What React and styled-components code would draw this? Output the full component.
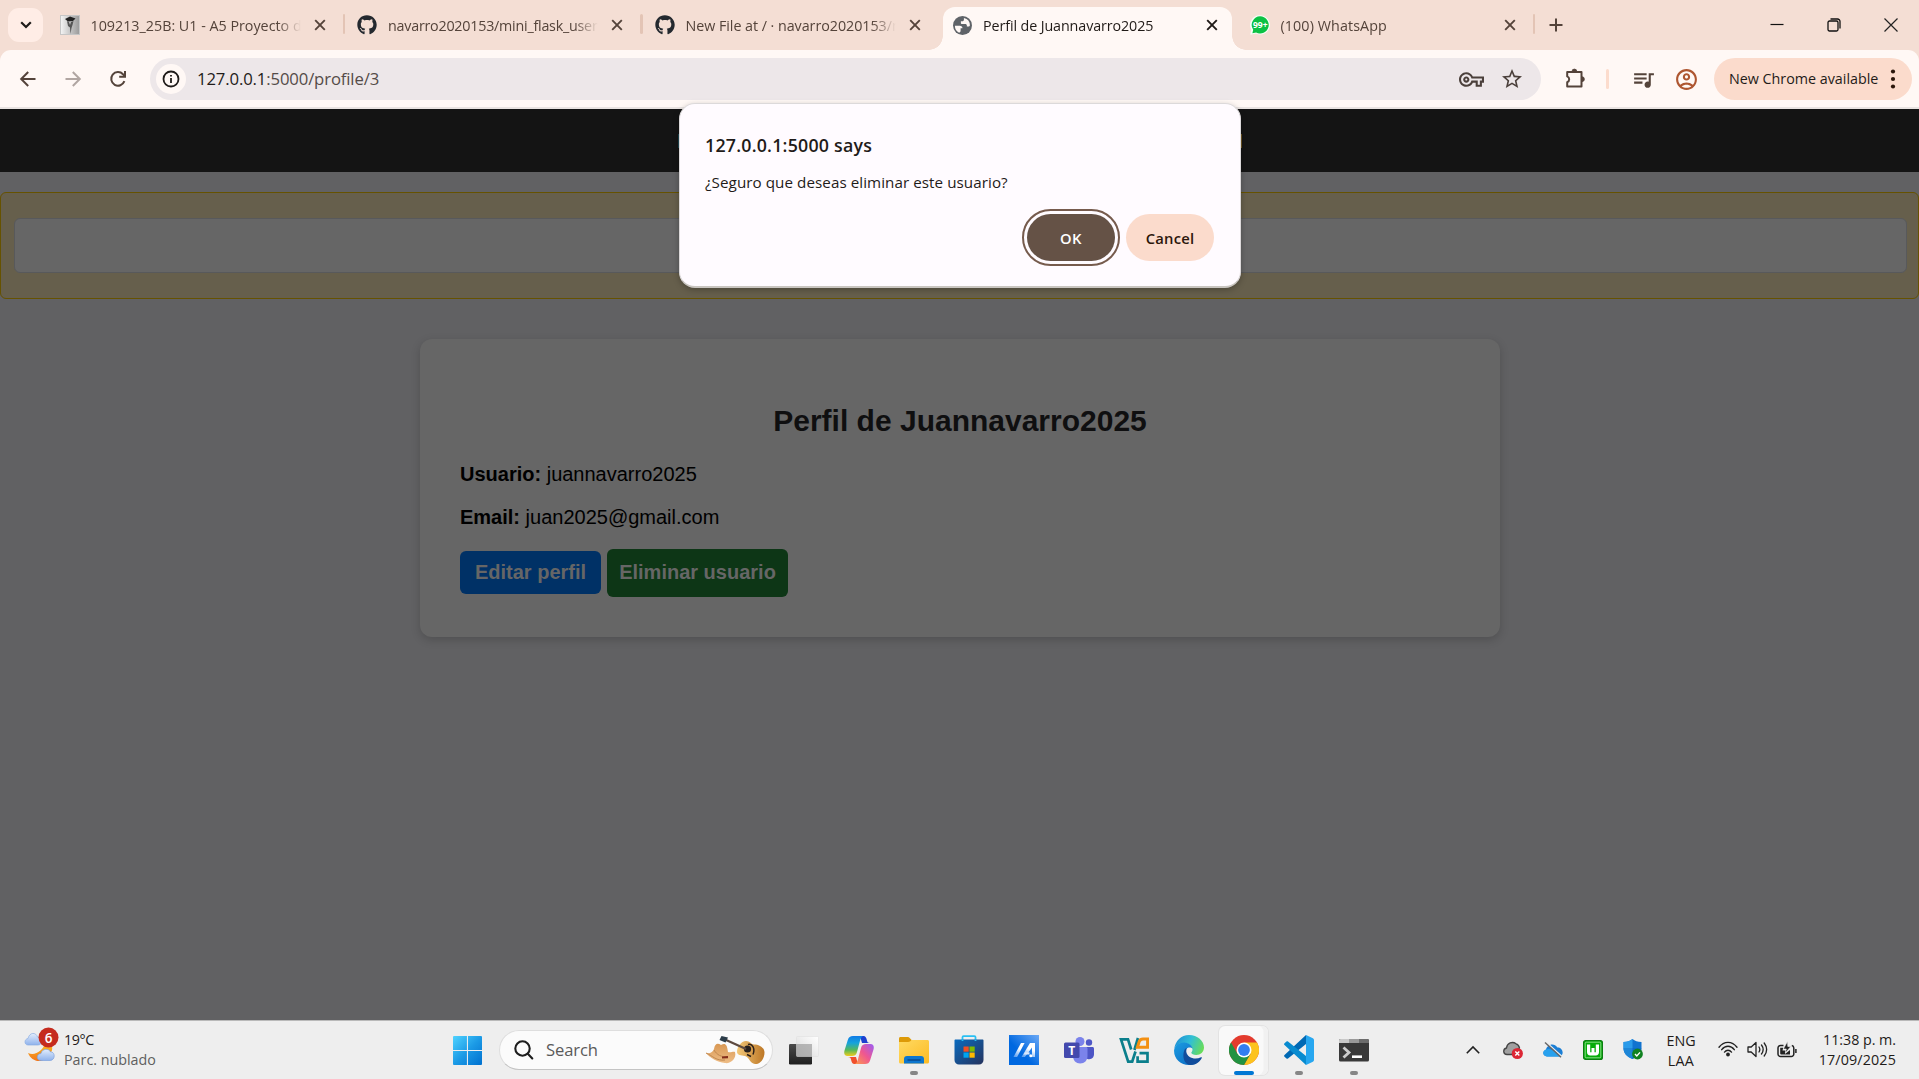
import React from "react";
import styled, { createGlobalStyle } from "styled-components";
import { FaGithub } from "react-icons/fa";
import {
  MdOutlineVpnKey,
  MdQueueMusic,
  MdOutlineAccountCircle,
  MdStarOutline,
} from "react-icons/md";

const GlobalStyle = createGlobalStyle`
  * { box-sizing: border-box; }
  body {
    margin: 0;
    overflow: hidden;
    background: #616163;
  }
  button { font-family: inherit; }
  svg { display: block; flex: none; }
`;

const uiFont = `"Open Sans", "Noto Sans", sans-serif`;
const pageFont = `"Liberation Sans", Arial, sans-serif`;

/* ---------- window ---------- */

const Desktop = styled.div`
  position: relative;
  display: grid;
  grid-template-rows: 50px 59px 911px 59px;
  width: 1919px;
  height: 1079px;
  overflow: hidden;
  font-family: ${uiFont};
`;

const Label = styled.span`
  font-size: ${(p) => p.$size || 14.3}px;
  font-weight: ${(p) => p.$weight || 400};
  letter-spacing: ${(p) => p.$track || 0}px;
  color: ${(p) => p.$color || "#1f1b19"};
  line-height: 20px;
  white-space: nowrap;
`;

/* ---------- tab strip ---------- */

const TabStrip = styled.header`
  display: flex;
  background: #f4ded4;
`;

const TabSearch = styled.button`
  display: grid;
  place-items: center;
  width: 35px;
  height: 34px;
  margin: 8px 3px 0 8px;
  padding: 0;
  border: 0;
  border-radius: 11px;
  background: #ffede6;
`;

const Tab = styled.div`
  position: relative;
  width: 297.5px;
  padding: 7px 4px 0;
  &::before {
    content: "";
    position: absolute;
    left: -1px;
    top: 14px;
    width: 2.5px;
    height: 20px;
    border-radius: 2px;
    background: ${(p) => (p.$divider ? "#e3c4b5" : "transparent")};
  }
`;

const TabBody = styled.div`
  position: relative;
  display: flex;
  align-items: center;
  height: 43px;
  padding: 0 14px 7px 9.5px;
  border-radius: 12px 12px 0 0;
  background: ${(p) => (p.$active ? "#fff8f5" : "transparent")};
  &::before,
  &::after {
    content: "";
    display: ${(p) => (p.$active ? "block" : "none")};
    position: absolute;
    bottom: 0;
    width: 14px;
    height: 14px;
  }
  &::before {
    left: -14px;
    background: radial-gradient(circle at 0 0, transparent 13.5px, #fff8f5 14px);
  }
  &::after {
    right: -14px;
    background: radial-gradient(circle at 100% 0, transparent 13.5px, #fff8f5 14px);
  }
`;

const Favicon = styled.span`
  display: grid;
  place-items: center;
  width: 20px;
  height: 20px;
  margin-right: 11px;
  color: #24292f;
`;

const TabTitle = styled.div`
  flex: 1;
  overflow: hidden;
  margin-right: 13px;
  mask-image: linear-gradient(to right, #000 calc(100% - 24px), transparent);
`;

const NewTab = styled(Tab)`
  width: 46px;
  display: flex;
  padding: 16px 0 0 13px;
`;

const WindowControls = styled.div`
  display: flex;
  align-items: center;
  gap: 37px;
  margin-left: auto;
  padding: 0 21px 1px 0;
`;

/* ---------- toolbar ---------- */

const ToolbarFrame = styled.div`
  background: #f4ded4;
`;

const Toolbar = styled.nav`
  display: flex;
  align-items: center;
  height: 59px;
  padding: 1px 7px 0 17px;
  border-bottom: 2px solid #e9e3e1;
  border-radius: 11px 11px 0 0;
  background: #fff8f5;
  color: #54433a;
`;

const NavButtons = styled.div`
  display: flex;
  gap: 23px;
  margin-right: 21px;
`;

const Omnibox = styled.div`
  display: flex;
  align-items: center;
  width: 1391px;
  height: 42px;
  padding: 0 17px 0 6px;
  border-radius: 21px;
  background: #ede7e9;
  color: #4b403b;
`;

const SiteInfo = styled.span`
  display: grid;
  place-items: center;
  width: 30px;
  height: 30px;
  margin-right: 11px;
  border-radius: 50%;
  background: #fff8f5;
`;

const OmniActions = styled.div`
  display: flex;
  align-items: center;
  gap: 16px;
  margin-left: auto;
`;

const ToolbarActions = styled.div`
  display: flex;
  align-items: center;
  margin-left: 22px;
`;

const ToolbarDivider = styled.span`
  width: 2.5px;
  height: 20px;
  margin: 0 22px 0 19px;
  border-radius: 2px;
  background: #fcdccd;
`;

const ProfileButton = styled.span`
  margin-left: 18px;
  color: #ae5630;
`;

const UpdateChip = styled.button`
  display: flex;
  align-items: center;
  justify-content: space-between;
  width: 198px;
  height: 42px;
  margin: -1px 0 0 auto;
  padding: 0 16px 0 15px;
  border: 0;
  border-radius: 21px;
  background: #fbdbcc;
`;

/* ---------- web page ---------- */

const Page = styled.main`
  background: #616163;
  font-family: ${pageFont};
`;

const SiteNav = styled.div`
  display: flex;
  justify-content: center;
  align-items: center;
  height: 63px;
  background: #141414;
`;

const NavLinks = styled.div`
  width: 564px;
  height: 14px;
  border-left: 1px solid #1f4650;
  border-right: 1px solid #6b5320;
`;

const Alert = styled.div`
  height: 107px;
  margin-top: 20px;
  padding: 25px 11px 25px 13px;
  border: 1px solid #665200;
  border-radius: 6px;
  background: #665f4c;
`;

const AlertBox = styled.div`
  height: 55px;
  border: 1px solid #58595b;
  border-radius: 6px;
  background: #666666;
`;

const Card = styled.section`
  width: 1080px;
  height: 298px;
  margin: 40px 0 0 420px;
  padding: 65px 40px 0;
  border-radius: 12px;
  background: #666666;
  box-shadow: 0 3px 10px rgba(0, 0, 0, 0.18);
`;

const Heading = styled.h2`
  margin: 0 0 25px;
  font-size: 30px;
  line-height: 34px;
  text-align: center;
  color: #0f0f10;
`;

const Field = styled.p`
  margin: 0 0 20px;
  font-size: 20px;
  line-height: 23px;
  color: #000;
`;

const Actions = styled.div`
  display: flex;
  align-items: flex-start;
  gap: 6px;
`;

const PageButton = styled.button`
  width: ${(p) => p.$width}px;
  height: ${(p) => p.$height}px;
  margin-top: ${(p) => p.$drop || 0}px;
  padding: 0 0 ${(p) => 2 - (p.$drop || 0) / 2}px;
  border: 0;
  border-radius: 6px;
  background: ${(p) => p.$tone};
  font: 700 20px/23px ${pageFont};
  color: #666666;
`;

/* ---------- dialog ---------- */

const Dialog = styled.div`
  position: absolute;
  left: 679px;
  top: 103px;
  width: 562px;
  height: 185px;
  padding: 31px 26px 0 25px;
  border: 1px solid #dcd9da;
  border-bottom: 2px solid #c9c5c0;
  border-radius: 16px;
  background: #fffbff;
  box-shadow: 0 2px 6px rgba(0, 0, 0, 0.25);
`;

const DialogText = styled.div`
  display: flex;
  flex-direction: column;
  gap: 17px;
`;

const DialogActions = styled.div`
  display: flex;
  justify-content: flex-end;
  gap: 11px;
  margin-top: 22px;
`;

const DialogButton = styled.button`
  width: 88px;
  height: 47px;
  padding: 1px 0 0;
  border: 0;
  border-radius: 24px;
  background: ${(p) => (p.$primary ? "#655246" : "#fbdbcc")};
  outline: ${(p) => (p.$primary ? "2px solid #765b4d" : "none")};
  outline-offset: 3px;
`;

/* ---------- taskbar ---------- */

const Taskbar = styled.footer`
  display: grid;
  grid-template-columns: 453px 1013px 1fr;
  border-top: 1px solid #b9b9b9;
  background: #eeeeee;
`;

const Weather = styled.div`
  display: flex;
  gap: 3px;
  padding: 5px 0 0 24px;
`;

const Stack = styled.div`
  display: flex;
  flex-direction: column;
  padding-top: 4px;
`;

const Apps = styled.div`
  display: flex;
  align-items: center;
`;

const SearchBox = styled.div`
  display: flex;
  align-items: center;
  width: 274px;
  height: 40px;
  margin: 0 3px 1px 17px;
  padding: 0 7px 0 14px;
  border: 1px solid #dedede;
  border-bottom-color: #c4c4c4;
  border-radius: 20px;
  background: #fbfbfb;
`;

const SearchLabel = styled(Label)`
  margin-left: 12px;
  margin-right: auto;
  padding-top: 1px;
`;

const AppSlot = styled.div`
  position: relative;
  display: grid;
  place-items: center;
  width: 49px;
  height: 49px;
  margin: 0 3px;
  border-radius: 6px;
  background: ${(p) => (p.$active ? "#f9f9f9" : "transparent")};
  box-shadow: ${(p) =>
    p.$active ? "inset -5px 0 0 -0.5px #f1f1f1, 0 0 0 1px #e3e3e3" : "none"};
  &::after {
    content: "";
    display: ${(p) => (p.$running || p.$active ? "block" : "none")};
    position: absolute;
    bottom: 0;
    width: ${(p) => (p.$active ? 20 : 8)}px;
    height: 4px;
    border-radius: 2px;
    background: ${(p) => (p.$active ? "#0078d4" : "#868686")};
  }
`;

const Tray = styled.div`
  display: flex;
  align-items: center;
  padding-right: 23px;
`;

const TrayIcons = styled.div`
  display: flex;
  align-items: center;
  gap: 20px;
  padding-bottom: 1px;
  margin-left: 23px;
`;

const Language = styled.div`
  display: flex;
  flex-direction: column;
  align-items: center;
  width: 40px;
  margin: 1px 17px 0 18px;
`;

const StatusIcons = styled.div`
  display: flex;
  align-items: center;
  gap: 9px;
  padding-bottom: 2px;
`;

const Clock = styled.div`
  display: flex;
  flex-direction: column;
  align-items: flex-end;
  margin-left: auto;
`;

/* ---------- icons ---------- */

const CloseIcon = ({ color = "#54433a" }) => (
  <svg width="12" height="12" viewBox="0 0 12 12" stroke={color} strokeWidth="1.9">
    <path d="M1.2 1.2 10.8 10.8M10.8 1.2 1.2 10.8" />
  </svg>
);

const CourseIcon = () => (
  <svg width="20" height="20" viewBox="0 0 20 20">
    <defs>
      <linearGradient id="course" x1="0" y1="0" x2="1" y2="0">
        <stop offset="0" stopColor="#f5f5f5" />
        <stop offset="1" stopColor="#999" />
      </linearGradient>
    </defs>
    <rect x=".5" y=".5" width="19" height="19" fill="url(#course)" stroke="#c6c6c6" />
    <path d="m5 4 5-2.500 5.500 2L13 6 8 6.500z" fill="#222" />
    <path d="m7 6 1 5 2 1.500.5 6.500 1-6 1-3 1-4-2.500 1-1 3-1-3z" fill="#555" />
  </svg>
);

const GlobeIcon = () => (
  <svg width="19" height="19" viewBox="0 0 20 20">
    <circle cx="10" cy="10" r="10" fill="#5f6368" />
    <path
      d="M2 10.200h5.200c1.700 0 2.800 1 2.800 2.600h-2v2.600c0 1.200-.7 2-2 1.900A8.200 8.200 0 0 1 2 10.200zM11.500 2v2c0 1-.8 1.600-1.800 1.600H8.300v1.700c0 .8.4 1.200 1.300 1.200h3.300c1 0 1.700.7 1.700 1.600v1c1.600 0 2.600.2 3.200-1.100A8.200 8.200 0 0 0 11.500 2z"
      fill="#fff8f5"
    />
  </svg>
);

const WhatsAppIcon = () => (
  <svg width="20" height="20" viewBox="0 0 20 20">
    <path d="M10.200.3a9.600 9.600 0 1 1-4.200 18.200L.3 19.700l1-5.200A9.600 9.600 0 0 1 10.200.3z" fill="#f4fff7" />
    <path d="M10.200 1.300a8.600 8.600 0 1 1-4.100 16.200l-3.700.8.800-3.600a8.600 8.600 0 0 1 7-13.400z" fill="#0bc144" />
    <text x="10.300" y="13.400" fontSize="8.500" fontWeight="700" textAnchor="middle" fill="#fff" fontFamily="Open Sans, sans-serif" textLength="14.500">
      99+
    </text>
  </svg>
);

const ArrowIcon = ({ flip, color = "#54433a" }) => (
  <svg width="22" height="22" viewBox="0 0 22 22" fill="none" stroke={color} strokeWidth="2">
    {flip ? <path d="M3.500 11h14M10.800 4l7 7-7 7" /> : <path d="M18.500 11h-14M11.200 4l-7 7 7 7" />}
  </svg>
);

const ReloadIcon = () => (
  <svg width="22" height="22" viewBox="0 0 22 22" fill="none" stroke="#54433a" strokeWidth="2">
    <path d="M17.400 13.200A6.800 6.800 0 1 1 16 6.200l1.500 1.500" />
    <path d="M18 3v5.800h-5.800" />
  </svg>
);

const InfoIcon = () => (
  <svg width="18" height="18" viewBox="0 0 18 18" fill="none" stroke="#1f1b19" strokeWidth="1.800">
    <circle cx="9" cy="9" r="7.500" />
    <path d="M9 8v5M9 4.900v1.700" />
  </svg>
);

const PuzzleIcon = () => (
  <svg width="24" height="24" viewBox="0 0 24 24" stroke="#54433a" strokeLinejoin="round">
    <path d="M4.200 5h14.300v14.500H4.200v-4.300a3.100 3.100 0 0 0 0-5.800z" fill="none" strokeWidth="2" />
    <path d="M9 4.500a2.400 2.400 0 0 1 4.800 0zM19 9.800a2.400 2.400 0 0 1 0 4.800z" fill="#54433a" strokeWidth=".8" />
  </svg>
);

const WeatherIcon = () => (
  <svg width="37" height="38" viewBox="0 0 37 38">
    <defs>
      <linearGradient id="cloud" x1="0" y1="0" x2="0" y2="1">
        <stop offset="0" stopColor="#e2edfc" />
        <stop offset="1" stopColor="#8fb2ec" />
      </linearGradient>
      <linearGradient id="moon" x1="0" y1="0" x2="0" y2="1">
        <stop offset="0" stopColor="#fbbf24" />
        <stop offset="1" stopColor="#f2761b" />
      </linearGradient>
    </defs>
    <path d="M4 19c-4 0-4-6 0-6.500C5.500 6 12 6 13.500 11 19 11 19 19 14 19z" fill="url(#cloud)" stroke="#8baee2" strokeWidth=".7" />
    <path d="M21 17c8 0 9 6 5 11C20 38 8 37 4 27c7 3 15-2 17-10z" fill="url(#moon)" />
    <path d="M17 34.500c-5 0-5-6.500 0-7 1-5 8-5.500 9.500-1.500 5-.5 5 8.500-.5 8.500z" fill="url(#cloud)" stroke="#7ea2dc" strokeWidth=".7" />
    <circle cx="24.500" cy="11.500" r="10" fill="#c52b1e" />
    <text x="24.500" y="16.500" textAnchor="middle" fontSize="13.500" fontWeight="600" fill="#fff" fontFamily="Open Sans, sans-serif">
      6
    </text>
  </svg>
);

const WindowsIcon = () => (
  <svg width="29" height="29" viewBox="0 0 30 30">
    <defs>
      <linearGradient id="win" x1="0" y1="0" x2="1" y2="1">
        <stop offset="0" stopColor="#50d3ff" />
        <stop offset=".5" stopColor="#1c9be6" />
        <stop offset="1" stopColor="#0070cf" />
      </linearGradient>
    </defs>
    <path
      d="M1 0H14.400V14.400H0V1a1 1 0 0 1 1-1zM15.500 0H29a1 1 0 0 1 1 1V14.400H15.500zM0 15.500H14.400V30H1a1 1 0 0 1-1-1zM15.500 15.500H30V29a1 1 0 0 1-1 1H15.500z"
      fill="url(#win)"
    />
  </svg>
);

const SearchIcon = () => (
  <svg width="20" height="20" viewBox="0 0 20 20" fill="none" stroke="#1d1d1d" strokeWidth="2.100" strokeLinecap="round">
    <circle cx="8.500" cy="8.500" r="7.200" />
    <path d="m13.800 13.800 4.500 4.700" />
  </svg>
);

const GuitarArt = () => (
  <svg width="60" height="30" viewBox="0 0 60 30">
    <defs>
      <linearGradient id="guitar" x1="0" y1="0" x2="1" y2="0">
        <stop offset="0" stopColor="#f3c878" />
        <stop offset="1" stopColor="#bd7726" />
      </linearGradient>
      <linearGradient id="hat" x1="0" y1="0" x2="0" y2="1">
        <stop offset="0" stopColor="#d99853" />
        <stop offset="1" stopColor="#eebd86" />
      </linearGradient>
    </defs>
    <path d="M32 17c0-5 4-11 9-11 4 0 4.500 3 8 3.500 5 0 10.500 3 10.500 8C59.500 24 55 29.500 50 29c-5-.5-5.500-6.500-10-8-4-.5-8-1-8-4z" fill="url(#guitar)" />
    <path d="M43 9.500c4-1.500 7.500 4 5 10M42 19.500l4 2" fill="none" stroke="#2c2019" strokeWidth="1.500" />
    <circle cx="42.500" cy="14" r="3.600" fill="#27201d" />
    <path d="m20 4.500 21 9.500" stroke="#5d4a40" strokeWidth="2.300" />
    <path d="m16.500 1 6.500 1.500-2.500 5-6-2.500z" fill="#2c3d49" />
    <path d="M1 18c4 1 7-1 8-4 1-6 4-6 7-4 4-2 6-1 7 7 3 1 5-1 7 0 2 7-5 12-10 11C12 27 5 23 1 18z" fill="url(#hat)" />
    <path d="M9 15c3 5 7 7 14 7M1 18c7 3 10 8 19 7" fill="none" stroke="#c08850" strokeWidth="1" />
    <path d="m17 21.500 6-.5v2.200l-6 .3z" fill="#832d1b" />
  </svg>
);

const TaskViewIcon = () => (
  <svg width="30" height="29" viewBox="0 0 30 29">
    <defs>
      <linearGradient id="tvd" x1="0" y1="0" x2="0" y2="1">
        <stop offset="0" stopColor="#4b4b4b" />
        <stop offset="1" stopColor="#1f1f1f" />
      </linearGradient>
      <linearGradient id="tvl" x1="1" y1="0" x2="0" y2="1">
        <stop offset="0" stopColor="#fff" />
        <stop offset="1" stopColor="#d9d9d9" />
      </linearGradient>
    </defs>
    <rect x="0" y="8" width="23" height="20.500" rx="1.200" fill="url(#tvd)" />
    <rect x="7.500" y=".5" width="22" height="20" rx="1" fill="url(#tvl)" stroke="#ddd" strokeWidth=".5" />
    <path d="M7.500 8H23v12.500H7.500z" fill="#8f8f8f" fillOpacity=".6" />
  </svg>
);

const CopilotIcon = () => (
  <svg width="30" height="28" viewBox="0 0 30 28">
    <defs>
      <linearGradient id="cpa" x1="0" y1="0" x2="0" y2="1">
        <stop offset="0" stopColor="#0f7be6" />
        <stop offset=".35" stopColor="#16a3dc" />
        <stop offset=".7" stopColor="#57b958" />
        <stop offset="1" stopColor="#f0cb1c" />
      </linearGradient>
      <linearGradient id="cpb" x1="1" y1="0" x2="0" y2="1">
        <stop offset="0" stopColor="#9a5cf5" />
        <stop offset=".5" stopColor="#ef5790" />
        <stop offset="1" stopColor="#fd9c4c" />
      </linearGradient>
    </defs>
    <path d="M16 0h3.500c2 0 2.800 1.500 3.500 4.500.4 1.800 1 2.500 3 2.500h-8z" fill="#1c3fd0" />
    <path d="M14 28h-3.500c-2 0-2.800-1.500-3.500-4.500C6.600 21.700 6 21 4 21h8z" fill="#f0502c" />
    <path d="M9 0h10c-2 1-2.500 3-3.200 5.500L13 16c-.8 3-2.500 4-5 4H3.500C.5 20-.3 17.500.5 14.500L3.800 4C4.800 1 6.200 0 9 0z" fill="url(#cpa)" />
    <path d="M21 28H11c2-1 2.500-3 3.200-5.500L17 12c.8-3 2.500-4 5-4h4.500c3 0 3.800 2.500 3 5.500L26.200 24c-1 3-2.400 4-5.200 4z" fill="url(#cpb)" />
  </svg>
);

const FolderIcon = () => (
  <svg width="30" height="27" viewBox="0 0 30 27">
    <defs>
      <linearGradient id="fold" x1="0" y1="0" x2="1" y2="1">
        <stop offset="0" stopColor="#ffda63" />
        <stop offset="1" stopColor="#fcbb23" />
      </linearGradient>
    </defs>
    <path d="M0 1.500C0 .6.6 0 1.500 0h7c1 0 1.500.3 2.200 1L13 3.500V8H0z" fill="#dd9a08" />
    <path d="M0 5h9c1 0 1.600-.2 2.300-.8L12.500 3H28.500c.9 0 1.500.6 1.500 1.500V25c0 .9-.6 1.500-1.500 1.500H1.500C.6 26.500 0 25.900 0 25z" fill="url(#fold)" />
    <path d="M5 26.500V22c0-1.800 1-3 3-3h14c2 0 3 1.200 3 3v4.500z" fill="#0d76ce" />
    <path d="M8.500 23h13" stroke="#063f80" strokeWidth="1.200" />
  </svg>
);

const StoreIcon = () => (
  <svg width="30" height="30" viewBox="0 0 30 30">
    <defs>
      <linearGradient id="store" x1="0" y1="0" x2="1" y2="1">
        <stop offset="0" stopColor="#0a6bbf" />
        <stop offset="1" stopColor="#26335d" />
      </linearGradient>
    </defs>
    <path d="M8.500 7V2.200c0-.7.4-1.100 1.100-1.100h10.800c.7 0 1.100.4 1.100 1.100V7" fill="none" stroke="#29c0f3" strokeWidth="1.800" />
    <path d="M.5 5.500c0-.6.4-1 1-1h27c.6 0 1 .4 1 1V25a4.500 4.500 0 0 1-4.500 4.500H5A4.500 4.500 0 0 1 .5 25z" fill="url(#store)" />
    <path d="M8.500 4.500V6m13-1.500V6" stroke="#29c0f3" strokeWidth="1.800" />
    <path d="M9.500 11.500h5.200v5.200H9.500z" fill="#f25022" />
    <path d="M15.500 11.500h5.200v5.200h-5.200z" fill="#7fba00" />
    <path d="M9.500 17.500h5.200v5.200H9.500z" fill="#00a4ef" />
    <path d="M15.500 17.500h5.200v5.200h-5.200z" fill="#ffb900" />
  </svg>
);

const AsusIcon = () => (
  <svg width="30" height="30" viewBox="0 0 30 30">
    <defs>
      <linearGradient id="asus" x1="1" y1="0" x2=".4" y2=".6">
        <stop offset="0" stopColor="#6aa8f5" />
        <stop offset="1" stopColor="#0068e0" />
      </linearGradient>
      <linearGradient id="asusL" x1="0" y1="1" x2=".4" y2="0">
        <stop offset="0" stopColor="#4c95ee" />
        <stop offset=".7" stopColor="#fff" />
      </linearGradient>
    </defs>
    <path d="M0 0h30v30H0z" fill="url(#asus)" />
    <path d="M4.500 22 12 8h3.600L8.100 22z" fill="url(#asusL)" />
    <path d="M12.500 22 21 8h5v14h-3V12.500L15.900 22z" fill="url(#asusL)" />
    <path d="M16 17.200h4.500v2.300h-6z" fill="#dbe9fd" />
    <circle cx="21.800" cy="20.800" r="1.500" fill="#fff" />
  </svg>
);

const TeamsIcon = () => (
  <svg width="30" height="27" viewBox="0 0 30 27">
    <circle cx="25" cy="5.500" r="3.200" fill="#4f57c6" />
    <path d="M21 10h7.500c.8 0 1.500.7 1.500 1.500V17c0 3-1.800 5.200-4.700 5.200-1.600 0-3-.6-4.300-2z" fill="#4d55c5" />
    <circle cx="16" cy="4.500" r="4.500" fill="#7b83eb" />
    <path d="M9 10h13c.8 0 1.500.7 1.500 1.500V19c0 4.500-3 7.500-7.300 7.500S9 23.500 9 19z" fill="#7b83eb" />
    <rect x="0" y="5.500" width="15.500" height="15.500" rx="1.500" fill="#4349ad" />
    <text x="7.700" y="17.500" textAnchor="middle" fontSize="12" fontWeight="700" fill="#fff" fontFamily="Open Sans, sans-serif">
      T
    </text>
  </svg>
);

const VirtualIcon = () => (
  <svg width="30" height="27" viewBox="0 0 30 27" fill="none" strokeWidth="2.700">
    <path d="M12.200 12.500 9 2.400H2L9.200 24.600h4L16.500 14.500" stroke="#0b7f8c" />
    <path d="M19 1 15.400 13" stroke="#0b7f8c" />
    <path d="M20.500 16.200h8v8.400H18.600v-5.400" stroke="#0b7f8c" />
    <path d="M18.400 10.300 20.300 4.400Q21.200 1.900 24 1.900h4.600v8.400z" stroke="#f39012" strokeWidth="3" />
  </svg>
);

const EdgeIcon = () => (
  <svg width="30" height="30" viewBox="0 0 30 30">
    <defs>
      <linearGradient id="edgeTop" x1="0" y1=".3" x2="1" y2=".6">
        <stop offset="0" stopColor="#1f8fd6" />
        <stop offset=".5" stopColor="#31bfd5" />
        <stop offset="1" stopColor="#69dd57" />
      </linearGradient>
      <linearGradient id="edgeLow" x1="0" y1="0" x2="1" y2="1">
        <stop offset="0" stopColor="#1b9de2" />
        <stop offset="1" stopColor="#0a62bd" />
      </linearGradient>
    </defs>
    <path d="M.3 14C1 6 7.300 0 15 0c8.500 0 15 6 15 12.500 0 4.500-3.500 7.500-7.700 7.500-3 0-5-1-5-2.200 0-.7 1.200-1.300 1.200-3.300C18.500 11 14.500 8 10 8 5 8 1.500 11 .3 14z" fill="url(#edgeTop)" />
    <path d="M.1 15C1 10.500 5 7.500 10 7.500c4.500 0 8.500 3 8.500 6.500-1-2-5-2-6.500.5-3 5 1 11.500 7 11.500 3 0 5-.8 7.500-2C24 28 20 30 15 30 6.500 30-.5 23.500.1 15z" fill="url(#edgeLow)" />
    <path d="M12 13.200c-4 2.500-4 16 4 16.700 6 .3 10-3.400 11.800-7 .3-.6-.3-.9-.8-.6-6 3-14 .5-14.700-5.500-.1-1.300 0-2.500.7-3.600z" fill="#114d9c" />
  </svg>
);

const ChromeIcon = () => (
  <svg width="30" height="30" viewBox="0 0 30 30">
    <circle cx="15" cy="15" r="15" fill="#e33b2e" />
    <path d="M15 7.500h13A15 15 0 0 1 15 30l6.500-11.250z" fill="#fcc31e" />
    <path d="M2 7.500A15 15 0 0 0 15 30l6.500-11.250H8.500z" fill="#229342" />
    <circle cx="15" cy="15" r="7.500" fill="#fff" />
    <circle cx="15" cy="15" r="5.900" fill="#327ef0" />
  </svg>
);

const CodeIcon = () => (
  <svg width="30" height="30" viewBox="0 0 30 30">
    <path d="M22 0v9L4 23.500c-.5.4-1 .4-1.500 0L.5 21.700c-.6-.6-.6-1.300 0-1.800z" fill="#0069b4" />
    <path d="M22 30v-9L4 6.500c-.5-.4-1-.4-1.500 0L.5 8.300c-.6.6-.6 1.300 0 1.800z" fill="#088bd0" />
    <path d="M22 0 28.900 3.300c.7.300 1.100.9 1.100 1.700v20c0 .8-.4 1.400-1.100 1.700L22 30z" fill="#27a7f0" />
  </svg>
);

const TerminalIcon = () => (
  <svg width="30" height="23" viewBox="0 0 30 23">
    <rect width="30" height="22.500" rx="1.500" fill="#393939" />
    <path d="M1.500 0H10v4H0V1.500A1.500 1.500 0 0 1 1.500 0z" fill="#c9c9c9" />
    <path d="M10 0h10v4H10z" fill="#999" />
    <path d="M20 0h8.500A1.500 1.500 0 0 1 30 1.500V4H20z" fill="#6c6c6c" />
    <path d="m4.500 8.500 5.500 5-5.500 5" fill="none" stroke="#ccc" strokeWidth="2.800" />
    <path d="M13 17.700h10" stroke="#fff" strokeWidth="2.600" />
  </svg>
);

const ChevronUp = () => (
  <svg width="14" height="10" viewBox="0 0 14 10" fill="none" stroke="#222" strokeWidth="1.600">
    <path d="m.8 8.200 6.200-6.200 6.200 6.200" />
  </svg>
);

const CloudErrorIcon = () => (
  <svg width="20" height="20" viewBox="0 0 20 20">
    <path d="M4 14.500c-4 0-4.500-5.500-.5-6.500C4 3 9.500 1 13 3.800c2.500.5 3 2 3.500 4.200l-6 6.500z" fill="#a0a0a0" stroke="#444" strokeWidth="1.300" />
    <circle cx="14.300" cy="13.500" r="5.600" fill="#dc2634" />
    <path d="m12.300 11.500 4 4m0-4-4 4" stroke="#fff" strokeWidth="1.400" />
  </svg>
);

const OneDriveIcon = () => (
  <svg width="20" height="18" viewBox="0 0 20 18">
    <path d="M4 15.500c-4.500-.5-5-5.500-1-7 1-5 8-7.500 11.500-2C20 6 22 15 16 15.500z" fill="#1a7ed5" />
    <path d="M4 15.500c-4.500-.5-5-5.500-1-7 3-1.500 6 0 8 1.500l8 4c-1 1-1.500 1.500-3 1.500z" fill="#28a1ee" />
    <path d="m3.500 1.500 15.500 14" stroke="#eee" strokeWidth="1.500" />
    <path d="m2 1.500 16 14.800" stroke="#666" strokeWidth="1.400" />
  </svg>
);

const GreenIcon = () => (
  <svg width="20" height="20" viewBox="0 0 20 20">
    <rect x=".6" y=".6" width="18.800" height="18.800" rx="2" fill="#07ac0a" stroke="#0b7d10" strokeWidth="1.200" />
    <rect x="2.200" y="2.200" width="15.600" height="15.600" rx="1" fill="none" stroke="#a4e7a1" strokeWidth=".8" />
    <path d="M4 4.500h3.200v7.700h1.300V8h3v4.200h1.300V4.500H16V12c0 2.200-1.200 3.400-3.200 3.400H7.200C5.200 15.400 4 14.200 4 12z" fill="#fff" />
  </svg>
);

const ShieldIcon = () => (
  <svg width="20" height="21" viewBox="0 0 20 21">
    <path d="M9.500 0c2.500 2 5 2.800 9 3v6c0 5-3 8.500-9 11C3.500 17.500.5 14 .5 9V3c4-.2 6.500-1 9-3z" fill="#1173cf" />
    <path d="M9.500 0v20C3.500 17.500.5 14 .5 9V3c4-.2 6.500-1 9-3z" fill="#2a9bea" />
    <path d="M.5 9h18c0 5-3 8.500-9 11C3.500 17.500.5 14 .5 9z" fill="#0a5eb5" fillOpacity=".35" />
    <circle cx="14.500" cy="15" r="5.400" fill="#108220" />
    <path d="m12 15 1.800 1.900 3.200-3.500" fill="none" stroke="#fff" strokeWidth="1.400" />
  </svg>
);

const WifiIcon = () => (
  <svg width="20" height="16" viewBox="0 0 20 16" fill="none" stroke="#222" strokeWidth="1.400" strokeLinecap="round">
    <path d="M1 6.200C6-.3 14-.3 19 6.200M3.700 8.700c3.500-4.600 9.100-4.600 12.600 0M6.500 11.100c2-2.500 5-2.500 7 0" />
    <circle cx="10" cy="13.500" r="1.200" fill="#222" />
  </svg>
);

const SpeakerIcon = () => (
  <svg width="21" height="17" viewBox="0 0 21 17" fill="none" stroke="#222" strokeWidth="1.300" strokeLinecap="round" strokeLinejoin="round">
    <path d="M1 6h3.200L9 1.500v14L4.200 11H1z" />
    <path d="M12 6c1 1.500 1 3.500 0 5M14.500 4c2 2.700 2 6.300 0 9M17.200 2c3 4 3 9 0 13" />
  </svg>
);

const BatteryIcon = () => (
  <svg width="20" height="17" viewBox="0 0 20 17">
    <path d="M6.500 4.500h-3A2.500 2.500 0 0 0 1 7v6a2.500 2.500 0 0 0 2.500 2.500h10.800a2.500 2.500 0 0 0 2.500-2.500V7a2.500 2.500 0 0 0-2-2.400M18.900 8v4" fill="none" stroke="#222" strokeWidth="1.500" />
    <path d="M3.200 6.700h3L5.500 9.500h3L8 13l5-4v4.500H4.200a1 1 0 0 1-1-1z" fill="#222" />
    <path d="M10.500.5 6.300 8h3L8.300 12l5.500-6.500h-3z" fill="#222" stroke="#eee" strokeWidth=".6" />
  </svg>
);

/* ---------- data ---------- */

const tabs = [
  { title: "109213_25B: U1 - A5 Proyecto de", track: 0, icon: <CourseIcon /> },
  { title: "navarro2020153/mini_flask_users", track: -0.23, icon: <FaGithub size={20} />, divider: true },
  { title: "New File at / · navarro2020153/m", track: -0.04, icon: <FaGithub size={20} />, divider: true },
  { title: "Perfil de Juannavarro2025", track: -0.1, icon: <GlobeIcon />, active: true },
  { title: "(100) WhatsApp", track: 0.1, icon: <WhatsAppIcon /> },
];

const apps = [
  { icon: <TaskViewIcon /> },
  { icon: <CopilotIcon /> },
  { icon: <FolderIcon />, running: true },
  { icon: <StoreIcon /> },
  { icon: <AsusIcon /> },
  { icon: <TeamsIcon /> },
  { icon: <VirtualIcon /> },
  { icon: <EdgeIcon /> },
  { icon: <ChromeIcon />, active: true },
  { icon: <CodeIcon />, running: true },
  { icon: <TerminalIcon />, running: true },
];

export default function App() {
  return (
    <>
      <GlobalStyle />
      <Desktop>
        <TabStrip>
          <TabSearch>
            <svg width="12" height="8" viewBox="0 0 12 8" fill="none" stroke="#1f1b19" strokeWidth="2.200">
              <path d="m1.200 1.200 4.800 4.800 4.800-4.800" />
            </svg>
          </TabSearch>
          {tabs.map((tab) => (
            <Tab key={tab.title} $divider={tab.divider}>
              <TabBody $active={tab.active}>
                <Favicon>{tab.icon}</Favicon>
                <TabTitle>
                  <Label $track={tab.track} $color={tab.active ? "#201a17" : "#54433a"}>
                    {tab.title}
                  </Label>
                </TabTitle>
                <CloseIcon color={tab.active ? "#201a17" : undefined} />
              </TabBody>
            </Tab>
          ))}
          <NewTab $divider>
            <svg width="18" height="18" viewBox="0 0 18 18" stroke="#54433a" strokeWidth="2">
              <path d="M9 2.500v13M2.500 9h13" />
            </svg>
          </NewTab>
          <WindowControls>
            <svg width="14" height="14" viewBox="0 0 14 14" stroke="#111" strokeWidth="1.200">
              <path d="M.5 6.500h13" />
            </svg>
            <svg width="26" height="14" viewBox="-6 0 26 14" fill="none" stroke="#111" strokeWidth="1.300">
              <rect x="1" y="3" width="10" height="10" rx="1.500" />
              <path d="M3.500 1h7a2.500 2.500 0 0 1 2.500 2.500v7" />
            </svg>
            <svg width="14" height="14" viewBox="0 0 14 14" stroke="#222" strokeWidth="1.200">
              <path d="m.5.5 13 13m0-13-13 13" />
            </svg>
          </WindowControls>
        </TabStrip>

        <ToolbarFrame>
          <Toolbar>
            <NavButtons>
              <ArrowIcon />
              <ArrowIcon flip color="#b1a6a2" />
              <ReloadIcon />
            </NavButtons>
            <Omnibox>
              <SiteInfo>
                <InfoIcon />
              </SiteInfo>
              <Label $size={16.7} $track={-0.13}>
                127.0.0.1
              </Label>
              <Label $size={16.7} $track={-0.13} $color="#544b48">
                :5000/profile/3
              </Label>
              <OmniActions>
                <MdOutlineVpnKey size={25} />
                <MdStarOutline size={24} />
              </OmniActions>
            </Omnibox>
            <ToolbarActions>
              <PuzzleIcon />
              <ToolbarDivider />
              <MdQueueMusic size={25} />
              <ProfileButton>
                <MdOutlineAccountCircle size={25} />
              </ProfileButton>
            </ToolbarActions>
            <UpdateChip>
              <Label>New Chrome available</Label>
              <svg width="6" height="22" viewBox="0 0 6 22" fill="#2b160b">
                <circle cx="3" cy="3.500" r="2.100" />
                <circle cx="3" cy="11" r="2.100" />
                <circle cx="3" cy="18.500" r="2.100" />
              </svg>
            </UpdateChip>
          </Toolbar>
        </ToolbarFrame>

        <Page>
          <SiteNav>
            <NavLinks />
          </SiteNav>
          <Alert>
            <AlertBox />
          </Alert>
          <Card>
            <Heading>Perfil de Juannavarro2025</Heading>
            <Field>
              <strong>Usuario:</strong> juannavarro2025
            </Field>
            <Field>
              <strong>Email:</strong> juan2025@gmail.com
            </Field>
            <Actions>
              <PageButton $width={141} $height={43} $drop={2} $tone="#003166">
                Editar perfil
              </PageButton>
              <PageButton $width={181} $height={48} $tone="#0d3616">
                Eliminar usuario
              </PageButton>
            </Actions>
          </Card>
        </Page>

        <Taskbar>
          <Weather>
            <WeatherIcon />
            <Stack>
              <Label $track={-0.4}>19°C</Label>
              <Label $color="#5f5f5f">Parc. nublado</Label>
            </Stack>
          </Weather>
          <Apps>
            <WindowsIcon />
            <SearchBox>
              <SearchIcon />
              <SearchLabel $size={16.6} $track={-0.1} $color="#5a5a5a">
                Search
              </SearchLabel>
              <GuitarArt />
            </SearchBox>
            {apps.map((app, i) => (
              <AppSlot key={i} $running={app.running} $active={app.active}>
                {app.icon}
              </AppSlot>
            ))}
          </Apps>
          <Tray>
            <ChevronUp />
            <TrayIcons>
              <CloudErrorIcon />
              <OneDriveIcon />
              <GreenIcon />
              <ShieldIcon />
            </TrayIcons>
            <Language>
              <Label>ENG</Label>
              <Label $track={0.3}>LAA</Label>
            </Language>
            <StatusIcons>
              <WifiIcon />
              <SpeakerIcon />
              <BatteryIcon />
            </StatusIcons>
            <Clock>
              <Label $track={-0.04}>11:38 p. m.</Label>
              <Label $track={0.14}>17/09/2025</Label>
            </Clock>
          </Tray>
        </Taskbar>

        <Dialog>
          <DialogText>
            <Label $size={17.8} $weight={600} $track={0.22}>
              127.0.0.1:5000 says
            </Label>
            <Label $size={15.2} $track={0.06}>
              ¿Seguro que deseas eliminar este usuario?
            </Label>
          </DialogText>
          <DialogActions>
            <DialogButton $primary>
              <Label $size={14.8} $weight={600} $track={0.5} $color="#fff">
                OK
              </Label>
            </DialogButton>
            <DialogButton>
              <Label $size={14.8} $weight={600} $track={0.2} $color="#2b160b">
                Cancel
              </Label>
            </DialogButton>
          </DialogActions>
        </Dialog>
      </Desktop>
    </>
  );
}
